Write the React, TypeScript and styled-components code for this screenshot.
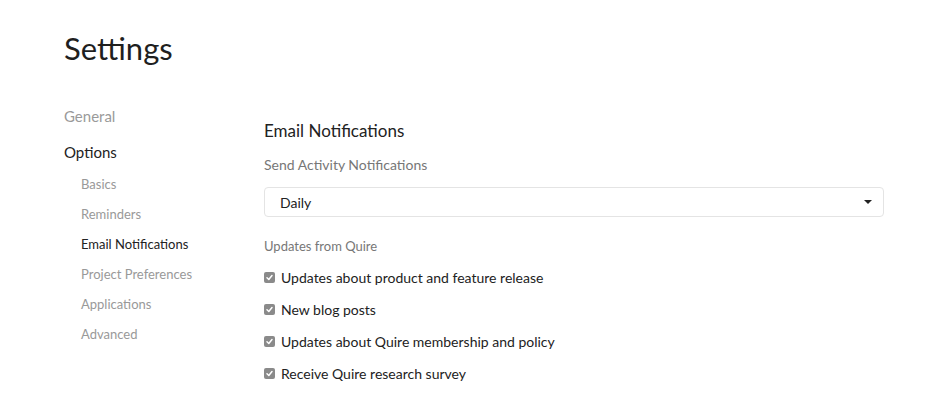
import React from "react";
import styled, { createGlobalStyle } from "styled-components";

const Global = createGlobalStyle`
  html, body { margin: 0; padding: 0; background: #fff; }
  body { font-family: Lato, "Noto Sans", sans-serif; color: #222; }
`;

const Page = styled.div`
  padding: 28px 0 0 64px;
  width: 943px;
  box-sizing: border-box;
`;

const Title = styled.h1`
  margin: 0;
  font-size: 31px;
  font-weight: 400;
  line-height: 40px;
  color: #1f1f1f;
`;

const Body = styled.div`
  display: flex;
  margin-top: 38px;
`;

const Sidebar = styled.nav`
  width: 200px;
  display: flex;
  flex-direction: column;
`;

const TopItem = styled.div<{ $active?: boolean }>`
  font-size: 15px;
  line-height: 20px;
  height: 20px;
  color: ${(p) => (p.$active ? "#222" : "#9a9a9a")};
  margin-bottom: 16px;
`;

const SubList = styled.div`
  display: flex;
  flex-direction: column;
  padding-left: 17px;
  margin-top: -9px;
`;

const SubItem = styled.div<{ $active?: boolean }>`
  font-size: 13px;
  line-height: 30px;
  color: ${(p) => (p.$active ? "#222" : "#999")};
`;

const Main = styled.section`
  flex: 0 0 620px;
  padding-top: 13px;
`;

const Heading = styled.h2`
  margin: 0;
  font-size: 17px;
  font-weight: 400;
  line-height: 24px;
  color: #222;
`;

const Label = styled.div<{ $size?: number }>`
  font-size: ${(p) => p.$size ?? 14}px;
  line-height: 20px;
  color: #777;
`;

const SubLabel = styled(Label)`
  margin-top: 12px;
`;

const SelectBox = styled.div`
  margin: 12px 0 19px;
  height: 30px;
  box-sizing: border-box;
  border: 1px solid #e4e4e4;
  border-radius: 4px;
  display: flex;
  align-items: center;
  justify-content: space-between;
  padding: 0 11px 0 15px;
  font-size: 14px;
  color: #222;
`;

const Caret = styled.span`
  width: 0;
  height: 0;
  border-left: 4px solid transparent;
  border-right: 4px solid transparent;
  border-top: 4px solid #222;
`;

const Options = styled.div`
  display: flex;
  flex-direction: column;
  margin-top: 5px;
`;

const Row = styled.label`
  display: flex;
  align-items: center;
  gap: 6px;
  height: 32px;
  font-size: 14px;
  color: #222;
`;

const Box = styled.span`
  width: 11px;
  height: 11px;
  border-radius: 2px;
  background: #8a8a8a;
  display: flex;
  align-items: center;
  justify-content: center;
`;

const Check = () => (
  <Box>
    <svg width="9" height="9" viewBox="0 0 9 9">
      <path d="M2 4.8 L3.8 6.5 L7 2.6" fill="none" stroke="#fff" strokeWidth="1.5" strokeLinecap="round" strokeLinejoin="round" />
    </svg>
  </Box>
);

const subs = ["Basics", "Reminders", "Email Notifications", "Project Preferences", "Applications", "Advanced"];
const opts = [
  "Updates about product and feature release",
  "New blog posts",
  "Updates about Quire membership and policy",
  "Receive Quire research survey",
];

export default function App() {
  return (
    <Page>
      <Global />
      <Title>Settings</Title>
      <Body>
        <Sidebar>
          <TopItem>General</TopItem>
          <TopItem $active>Options</TopItem>
          <SubList>
            {subs.map((s) => (
              <SubItem key={s} $active={s === "Email Notifications"}>{s}</SubItem>
            ))}
          </SubList>
        </Sidebar>
        <Main>
          <Heading>Email Notifications</Heading>
          <SubLabel>Send Activity Notifications</SubLabel>
          <SelectBox>
            <span>Daily</span>
            <Caret />
          </SelectBox>
          <Label $size={13}>Updates from Quire</Label>
          <Options>
            {opts.map((o) => (
              <Row key={o}>
                <Check />
                {o}
              </Row>
            ))}
          </Options>
        </Main>
      </Body>
    </Page>
  );
}
